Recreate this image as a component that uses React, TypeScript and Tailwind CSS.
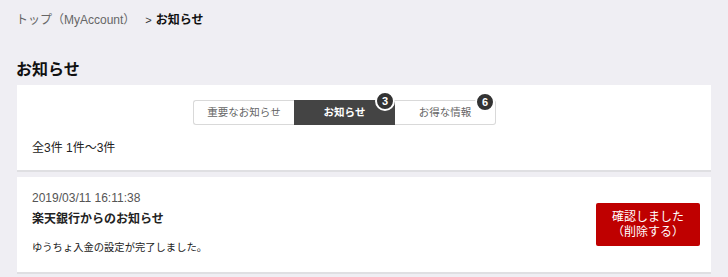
const tabs = [
  { label: "重要なお知らせ", badge: null as number | null, active: false },
  { label: "お知らせ", badge: 3, active: true },
  { label: "お得な情報", badge: 6, active: false },
];

export default function App() {
  return (
    <div
      className="min-h-[277px] w-[728px] bg-[#efeef3] pb-1"
      style={{ fontFamily: '"Liberation Sans", "Noto Sans CJK JP", sans-serif' }}
    >
      {/* Breadcrumb */}
      <div className="flex items-center px-4 pt-[10px] text-[12px] leading-5">
        <span className="text-[#666]">トップ（MyAccount）</span>
        <span className="ml-[10px] text-[11px] text-[#333]">&gt;</span>
        <span className="ml-[4px] font-bold text-[#111]">お知らせ</span>
      </div>

      <h1 className="mt-[28px] px-4 text-[16px] font-bold leading-6 text-[#111]">お知らせ</h1>

      {/* Tabs card */}
      <div className="mx-[17px] mt-[3px] h-[87px] border-b-2 border-[#dfdfe2] bg-white">
        <div className="flex pl-[176px] pt-[15px]">
          {tabs.map((t, i) => (
            <div
              key={t.label}
              className={`relative flex h-[25px] w-[101px] items-center justify-center text-[10.5px] ${
                i === 0 ? "rounded-l-[3px] border border-r-0 border-[#d9d9d9] bg-white text-[#666]" : ""
              } ${i === 2 ? "rounded-r-[3px] border border-l-0 border-[#d9d9d9] bg-white text-[#666]" : ""} ${
                t.active ? "bg-[#444] font-bold text-white" : ""
              }`}
            >
              {t.label}
              {t.badge !== null && (
                <span className="absolute right-[0px] top-[-9px] flex h-[20px] w-[20px] items-center justify-center rounded-full border-2 border-white bg-[#333] text-[11px] font-bold text-white">
                  {t.badge}
                </span>
              )}
            </div>
          ))}
        </div>
        <div className="mt-[13px] px-[15px] text-[12px] leading-5 text-[#222]">全3件 1件〜3件</div>
      </div>

      {/* Notice card */}
      <div className="mx-[17px] mt-[5px] flex h-[97px] items-start justify-between border-b-2 border-[#dfdfe2] bg-white pl-[15px] pr-[11px]">
        <div className="pt-[13px]">
          <div className="text-[12px] leading-4 text-[#555]">2019/03/11 16:11:38</div>
          <div className="mt-[3px] text-[12px] font-bold leading-5 text-[#222]">楽天銀行からのお知らせ</div>
          <div className="mt-[11px] text-[10.3px] leading-4 text-[#222]">ゆうちょ入金の設定が完了しました。</div>
        </div>
        <button className="mt-[26px] flex h-[43px] w-[104px] flex-col items-center justify-center rounded-[2px] bg-[#bf0000] text-[12px] leading-[15px] text-white">
          <span>確認しました</span>
          <span>（削除する）</span>
        </button>
      </div>
    </div>
  );
}
